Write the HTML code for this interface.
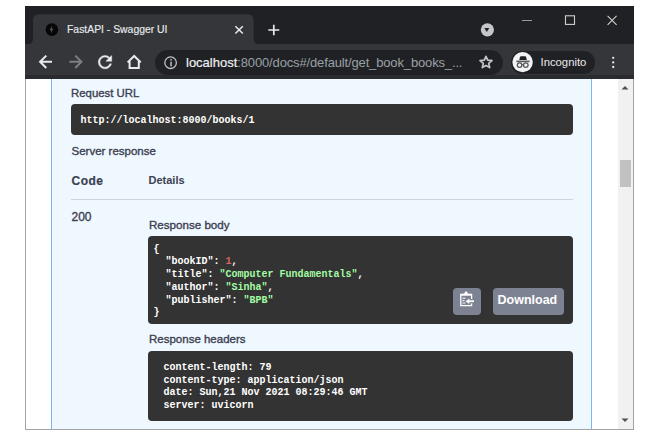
<!DOCTYPE html>
<html><head><meta charset="utf-8">
<style>
html,body{margin:0;padding:0;width:660px;height:440px;overflow:hidden;background:#fff;}
body{position:relative;font-family:"Liberation Sans",sans-serif;}
.a{position:absolute;}
.t{position:absolute;white-space:pre;line-height:1;}
.mono{font-family:"Liberation Mono",monospace;font-weight:bold;}
.sw{-webkit-text-stroke:0.35px #3b4151;}
svg{position:absolute;overflow:visible;}
</style></head><body>
<!-- window frame -->
<div class="a" style="left:25px;top:6px;width:609px;height:38px;background:#202124;"></div>
<!-- tab -->
<svg style="left:0;top:0" width="660" height="50"><path d="M27 44.5 Q33 44.5 33 38.5 V20.5 Q33 14.3 39.2 14.3 H247.5 Q253.7 14.3 253.7 20.5 V38.5 Q253.7 44.5 259.7 44.5 Z" fill="#35363a"/></svg>
<svg style="left:0;top:0" width="660" height="80">
  <circle cx="51.9" cy="29.6" r="6.3" fill="#060606"/>
  <path d="M51.5 25.6 Q51.9 29 53.4 29.5 Q51.9 30 51.5 33.4 Q51.1 30 49.6 29.5 Q51.1 29 51.5 25.6 Z" fill="#48484c"/>
  <!-- tab close -->
  <path d="M235.4 26.2 L242.8 33.5 M242.8 26.2 L235.4 33.5" stroke="#e8eaed" stroke-width="1.5"/>
  <!-- plus -->
  <path d="M273.8 24.8 V35.3 M268.3 30 H279.3" stroke="#e8eaed" stroke-width="1.7"/>
  <!-- tab search -->
  <circle cx="487.4" cy="29.8" r="6.6" fill="#c4c6ca"/>
  <path d="M484.3 28.1 L489.3 28.1 L486.8 32 Z" fill="#202124"/>
  <!-- window controls -->
  <path d="M522 20.5 H532" stroke="#9a9a9a" stroke-width="1"/>
  <rect x="565.5" y="15.8" width="9" height="8.6" fill="none" stroke="#d0d0d0" stroke-width="1.1"/>
  <path d="M607.6 15.9 L616.6 24.9 M616.6 15.9 L607.6 24.9" stroke="#d0d0d0" stroke-width="1.1"/>
</svg>
<div class="t" style="left:67px;top:25.2px;font-size:10.4px;color:#e8eaed;-webkit-text-stroke:0.15px #e8eaed;">FastAPI - Swagger UI</div>
<!-- toolbar -->
<div class="a" style="left:25px;top:44px;width:609px;height:35px;background:#35363a;"></div>
<div class="a" style="left:25px;top:74.5px;width:609px;height:4.5px;background:#2a2b2e;"></div>
<!-- omnibox -->
<div class="a" style="left:155px;top:49.6px;width:348px;height:25px;border-radius:12.5px;background:#202124;"></div>
<!-- incognito pill -->
<div class="a" style="left:510.5px;top:51px;width:84px;height:22.5px;border-radius:11.25px;background:#202124;"></div>
<svg style="left:0;top:0" width="660" height="80">
  <!-- back -->
  <path d="M52 61.8 H40 M46.3 55.6 L40.1 61.8 L46.3 68" stroke="#e8eaed" stroke-width="2" fill="none"/>
  <!-- forward -->
  <path d="M69.5 61.8 H81.5 M75.3 55.6 L81.4 61.8 L75.3 68" stroke="#7d7e82" stroke-width="2" fill="none"/>
  <!-- reload -->
  <g transform="translate(98.3 55.4) scale(0.84) translate(-4 -4)">
    <path d="M17.65 6.35C16.2 4.9 14.21 4 12 4c-4.42 0-7.99 3.58-7.99 8s3.57 8 7.99 8c3.730 0 6.84-2.55 7.73-6h-2.08c-.82 2.33-3.04 4-5.65 4-3.31 0-6-2.690-6-6s2.69-6 6-6c1.66 0 3.14.69 4.22 1.78L13 11h7V4l-2.35 2.35z" fill="#e8eaed" stroke="#e8eaed" stroke-width="0.5"/>
  </g>
  <!-- home -->
  <path d="M127.6 62.4 L134.2 56 L140.8 62.4 M129.6 60.6 V68 H138.8 V60.6" stroke="#e8eaed" stroke-width="2" fill="none" stroke-linejoin="miter"/>
  <!-- info -->
  <circle cx="170.6" cy="62.7" r="5.8" fill="none" stroke="#bdc1c6" stroke-width="1.3"/>
  <rect x="170.3" y="59.1" width="1.5" height="1.5" fill="#bdc1c6"/>
  <rect x="170.3" y="61.7" width="1.5" height="4.6" fill="#bdc1c6"/>
  <!-- star -->
  <path d="M486 56.3 L487.7 60.2 L492 60.6 L488.7 63.4 L489.7 67.6 L486 65.4 L482.3 67.6 L483.3 63.4 L480 60.6 L484.3 60.2 Z" fill="none" stroke="#c4c6ca" stroke-width="1.7" stroke-linejoin="round"/>
  <!-- incognito icon -->
  <circle cx="522.6" cy="62.1" r="10.2" fill="#f1f3f4"/>
  <path d="M519.3 60 L519.9 57.2 Q520.1 56.2 521.1 56.2 H525 Q526 56.2 526.2 57.2 L526.8 60 Z" fill="#202124"/>
  <rect x="516.4" y="60.6" width="13.2" height="1.6" fill="#55585d"/>
  <circle cx="519.6" cy="65.1" r="2.3" fill="none" stroke="#55585d" stroke-width="1.3"/>
  <circle cx="525.8" cy="65.1" r="2.3" fill="none" stroke="#55585d" stroke-width="1.3"/>
  <path d="M521.8 64.6 H523.6" stroke="#55585d" stroke-width="1"/>
  <!-- menu dots -->
  <circle cx="613.2" cy="57.8" r="1.15" fill="#e8eaed"/>
  <circle cx="613.2" cy="62.4" r="1.15" fill="#e8eaed"/>
  <circle cx="613.2" cy="67" r="1.15" fill="#e8eaed"/>
</svg>
<div class="t" style="left:186px;top:55.5px;font-size:13px;color:#9aa0a6;letter-spacing:-0.146px;"><span style="color:#eef0f2;letter-spacing:0;-webkit-text-stroke:0.2px #eef0f2;">localhost</span>:8000/docs#/default/get_book_books_...</div>
<div class="t" style="left:540.5px;top:57px;font-size:11.3px;color:#e8eaed;">Incognito</div>

<!-- content -->
<div class="a" style="left:25px;top:79px;width:607px;height:350px;background:#fff;border:1px solid #a3a3a3;border-top:none;"></div>
<div class="a" style="left:51px;top:79px;width:538.5px;height:350px;background:#eff7ff;border-left:1.5px solid #7ab8f5;border-right:1.5px solid #7ab8f5;"></div>
<!-- scrollbar -->
<div class="a" style="left:617.5px;top:79px;width:15.5px;height:350px;background:#f1f1f1;"></div>
<div class="a" style="left:620px;top:160px;width:11px;height:27px;background:#c1c1c1;"></div>
<svg style="left:0;top:0" width="660" height="440">
  <path d="M621.5 89.5 L628.5 89.5 L625 86 Z" fill="#505050"/>
  <path d="M621.5 418.5 L628.5 418.5 L625 422 Z" fill="#505050"/>
</svg>

<div class="t sw" style="left:71px;top:87.6px;font-size:11.4px;color:#3b4151;">Request URL</div>
<div class="a" style="left:71px;top:104px;width:502px;height:31.3px;border-radius:4px;background:#333;"></div>
<div class="t mono" style="left:80.5px;top:116px;font-size:10px;color:#fff;">http://localhost:8000/books/1</div>

<div class="t sw" style="left:71.5px;top:145.7px;font-size:11.5px;color:#3b4151;">Server response</div>
<div class="t" style="left:71.5px;top:175px;font-size:12px;letter-spacing:0.5px;font-weight:bold;color:#3b4151;-webkit-text-stroke:0.2px #3b4151;">Code</div>
<div class="t" style="left:148.5px;top:174.8px;font-size:11px;font-weight:bold;color:#3b4151;">Details</div>
<div class="a" style="left:71px;top:199px;width:502px;height:1px;background:#cdd4dc;"></div>
<div class="t sw" style="left:71.5px;top:210.5px;font-size:12px;color:#3b4151;">200</div>

<div class="t sw" style="left:149px;top:219.2px;font-size:11.6px;color:#3b4151;">Response body</div>
<div class="a" style="left:148px;top:236.3px;width:425px;height:87.7px;border-radius:4px;background:#333;"></div>
<div class="a mono" style="left:153.5px;top:243.5px;font-size:10px;line-height:12.8px;color:#fff;white-space:pre;">{
  "bookID": <span style="color:#d36363">1</span>,
  "title": <span style="color:#a2fca2">"Computer Fundamentals"</span>,
  "author": <span style="color:#a2fca2">"Sinha"</span>,
  "publisher": <span style="color:#a2fca2">"BPB"</span>
}</div>
<div class="a" style="left:453px;top:288px;width:28px;height:27px;border-radius:4px;background:#7d8293;"></div>
<div class="a" style="left:493px;top:288px;width:71px;height:27px;border-radius:4px;background:#7d8293;"></div>
<svg style="left:0;top:0" width="660" height="440">
  <rect x="460.8" y="294.4" width="10.8" height="11.2" fill="none" stroke="#fff" stroke-width="1.3"/>
  <path d="M463.6 294.6 L465.4 291.6 H466.8 L468.6 294.6 Z" fill="#fff"/>
  <path d="M460.6 294.8 H471.8" stroke="#fff" stroke-width="1.8"/>
  <path d="M462.5 298.2 H465.5 M462.5 300.6 H464.5 M462.5 303 H465.5" stroke="#fff" stroke-width="1"/>
  <rect x="470.9" y="299" width="1.6" height="4.4" fill="#7d8293"/>
  <path d="M468.5 301.2 H474" stroke="#fff" stroke-width="1.7"/>
  <path d="M465.6 301.2 L469.4 298.4 L469.4 304 Z" fill="#fff"/>
</svg>
<div class="t" style="left:497.5px;top:294.2px;font-size:12.5px;font-weight:bold;color:#fff;">Download</div>

<div class="t sw" style="left:149px;top:334.3px;font-size:11.5px;color:#3b4151;">Response headers</div>
<div class="a" style="left:148px;top:351px;width:425px;height:69.6px;border-radius:4px;background:#333;"></div>
<div class="a mono" style="left:163.5px;top:362px;font-size:10px;line-height:12.7px;color:#fff;white-space:pre;">content-length: 79
content-type: application/json
date: Sun,21 Nov 2021 08:29:46 GMT
server: uvicorn</div>
</body></html>
